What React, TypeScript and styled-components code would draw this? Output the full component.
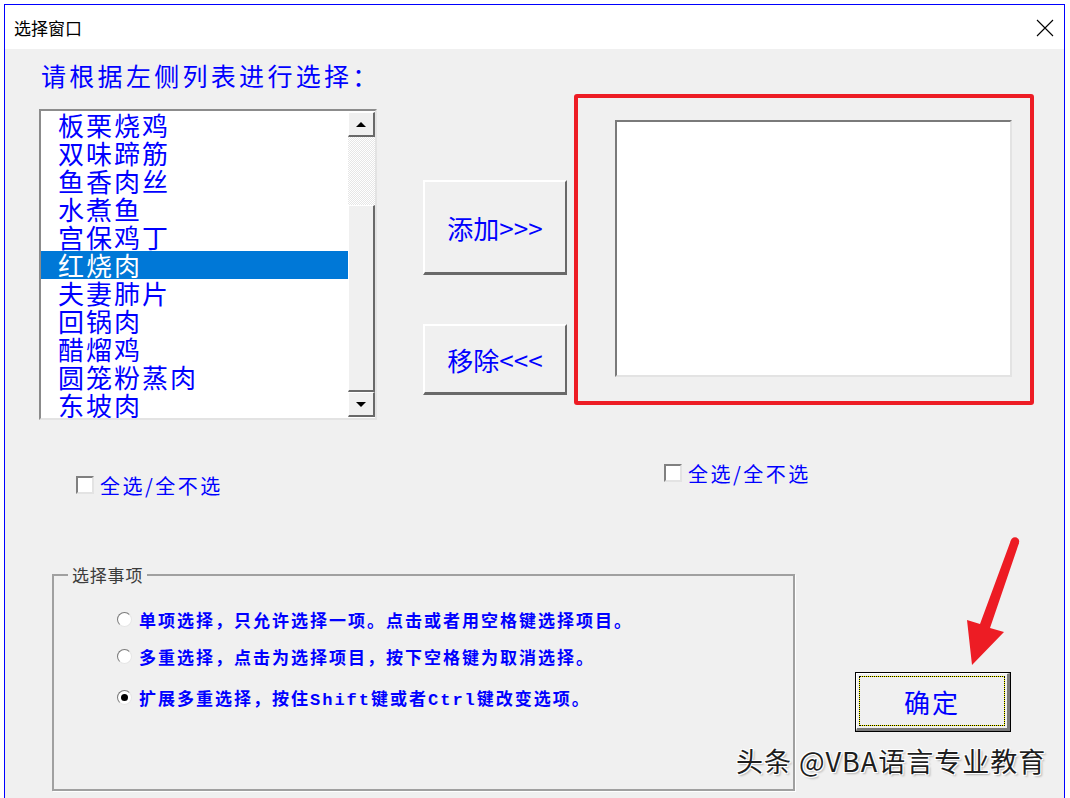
import styled, { createGlobalStyle } from 'styled-components';

const GlobalStyle = createGlobalStyle`
  html, body {
    margin: 0;
    padding: 0;
    background: #ffffff;
  }
  body {
    font-family: "Noto Sans CJK SC", sans-serif;
  }
  * {
    box-sizing: border-box;
  }
`;

const CJK = `"Noto Sans CJK SC", sans-serif`;

const Page = styled.div`
  position: relative;
  width: 1070px;
  height: 798px;
  overflow: hidden;
`;

const Window = styled.div`
  margin: 4px 0 0 4px;
  width: 1061px;
  height: 840px;
  border: 1px solid #0000ff;
  border-bottom: none;
  display: flex;
  flex-direction: column;
`;

const TitleBar = styled.div`
  height: 44px;
  background: #ffffff;
  display: flex;
  align-items: center;
  justify-content: space-between;
  padding: 0 10px 0 9px;
`;

const Title = styled.span`
  font-family: ${CJK};
  font-size: 17px;
  color: #000000;
`;

const CloseIcon = styled.svg`
  width: 18px;
  height: 18px;
  margin-top: 2px;
`;

const Body = styled.div`
  flex: 1;
  background: #f0f0f0;
`;

const Heading = styled.div`
  margin: 8px 0 0 36px;
  font-family: ${CJK};
  font-size: 25px;
  line-height: 36px;
  letter-spacing: 3.3px;
  color: #0000ff;
`;

const TopRow = styled.div`
  display: flex;
  align-items: flex-start;
  margin-top: 1px;
  padding-left: 34px;
`;

const ListBox = styled.div`
  margin-top: 15px;
  width: 338px;
  height: 311px;
  border-style: solid;
  border-width: 2px;
  border-color: #8c8c8c #e3e3e3 #e3e3e3 #8c8c8c;
  background: #ffffff;
  display: flex;
  overflow: hidden;
`;

const Items = styled.div`
  flex: 1;
  display: flex;
  flex-direction: column;
  overflow: hidden;
`;

const Item = styled.div<{ $selected?: boolean }>`
  flex: none;
  height: 28px;
  line-height: 28px;
  padding-left: 17px;
  font-family: ${CJK};
  font-size: 26px;
  letter-spacing: 2px;
  white-space: nowrap;
  color: ${({ $selected }) => ($selected ? '#ffffff' : '#0000ff')};
  background: ${({ $selected }) => ($selected ? '#0078d7' : 'transparent')};
`;

const ScrollBar = styled.div`
  width: 27px;
  display: flex;
  flex-direction: column;
  padding-top: 1px;
`;

const ScrollButton = styled.div`
  height: 25px;
  background: #f0f0f0;
  border-style: solid;
  border-width: 1px 2px 2px 1px;
  border-color: #ffffff #696969 #696969 #ffffff;
  display: flex;
  align-items: center;
  justify-content: center;
`;

const Triangle = styled.div<{ $down?: boolean }>`
  width: 0;
  height: 0;
  border-left: 5px solid transparent;
  border-right: 5px solid transparent;
  ${({ $down }) =>
    $down ? 'border-top: 5px solid #000000;' : 'border-bottom: 5px solid #000000;'}
`;

const Track = styled.div`
  height: 68px;
  background: repeating-conic-gradient(#ffffff 0 25%, #e6e6e6 0 50%) 0 0 / 2px 2px;
`;

const Thumb = styled.div`
  height: 187px;
  background: #f0f0f0;
  border-style: solid;
  border-width: 1px 2px 2px 1px;
  border-color: #ffffff #696969 #696969 #ffffff;
`;

const ButtonColumn = styled.div`
  margin: 86px 0 0 46px;
  display: flex;
  flex-direction: column;
  gap: 49px;
`;

const ActionButton = styled.div<{ $height: number }>`
  width: 144px;
  height: ${({ $height }) => $height}px;
  background: #f0f0f0;
  border-style: solid;
  border-width: 2px 2px 3px 2px;
  border-color: #ffffff #696969 #696969 #ffffff;
  display: flex;
  align-items: center;
  justify-content: center;
  font-family: ${CJK};
  font-size: 26px;
  color: #0000ff;
`;

const RedBox = styled.div`
  margin-left: 7px;
  width: 460px;
  height: 311px;
  border: 4px solid #ed1c24;
  border-radius: 3px;
  padding: 22px 0 0 37px;
`;

const TargetList = styled.div`
  width: 397px;
  height: 257px;
  background: #ffffff;
  border-style: solid;
  border-width: 2px;
  border-color: #7a7a7a #e3e3e3 #e3e3e3 #7a7a7a;
`;

const CheckRow = styled.div`
  display: grid;
  grid-template-columns: 588px auto;
  align-items: start;
  margin-top: 40px;
  padding-left: 71px;
`;

const CheckItem = styled.label<{ $offset: number }>`
  margin-top: ${({ $offset }) => $offset}px;
  height: 26px;
  display: flex;
  align-items: center;
  gap: 6px;
  font-family: ${CJK};
  font-size: 20px;
  letter-spacing: 2.5px;
  color: #0000ff;
`;

const CheckBox = styled.span`
  width: 18px;
  height: 18px;
  background: #ffffff;
  border-style: solid;
  border-width: 2px;
  border-color: #808080 #e3e3e3 #e3e3e3 #808080;
`;

const BottomRow = styled.div`
  display: flex;
  align-items: flex-start;
  margin-top: 67px;
  padding-left: 47px;
`;

const Frame = styled.fieldset`
  margin: 0;
  padding: 0;
  width: 743px;
  height: 226px;
  border: 2px solid #a0a0a0;
  box-shadow: 1px 1px 0 #ffffff;
`;

const FrameTitle = styled.legend`
  margin-left: 14px;
  padding: 0 4px;
  font-family: ${CJK};
  font-size: 17px;
  line-height: 20px;
  letter-spacing: 0.8px;
  color: #3c3c3c;
`;

const RadioList = styled.div`
  padding: 22px 0 0 63px;
  display: flex;
  flex-direction: column;
  gap: 13px;
`;

const RadioRow = styled.div<{ $shift?: number }>`
  margin-top: ${({ $shift }) => $shift ?? 0}px;
  height: 24px;
  display: flex;
  align-items: center;
  gap: 7px;
  font-family: "Liberation Mono", "Noto Sans CJK SC", monospace;
  font-size: 17px;
  font-weight: bold;
  letter-spacing: 2px;
  white-space: nowrap;
  color: #0000ff;
`;

const Radio = styled.span<{ $checked?: boolean }>`
  width: 15px;
  height: 15px;
  border-radius: 50%;
  background: #ffffff;
  border: 1px solid;
  border-color: #7a7a7a #e6e6e6 #e6e6e6 #7a7a7a;
  display: flex;
  align-items: center;
  justify-content: center;
  &::after {
    content: '';
    width: 7px;
    height: 7px;
    border-radius: 50%;
    background: ${({ $checked }) => ($checked ? '#000000' : 'transparent')};
  }
`;

const OkButton = styled.div`
  margin: 107px 0 0 60px;
  width: 156px;
  height: 60px;
  border: 1px solid #000000;
  background: #f0f0f0;
  display: flex;
`;

const OkInner = styled.div`
  flex: 1;
  border-style: solid;
  border-width: 1px 3px 3px 1px;
  border-color: #ffffff #7a7a7a #7a7a7a #ffffff;
  padding: 2px;
  display: flex;
`;

const FocusRect = styled.div`
  flex: 1;
  border: 1px solid #ffff00;
  outline: 1px dotted #000000;
  outline-offset: -1px;
  display: flex;
  align-items: center;
  justify-content: center;
  font-family: ${CJK};
  font-size: 26px;
  letter-spacing: 2px;
  color: #0000ff;
`;

const Arrow = styled.svg`
  position: absolute;
  left: 960px;
  top: 535px;
  width: 65px;
  height: 135px;
`;

const Watermark = styled.div`
  position: absolute;
  left: 736px;
  top: 743px;
  font-family: ${CJK};
  font-size: 27px;
  line-height: 36px;
  letter-spacing: 1px;
  color: #1e1e1e;
  white-space: nowrap;
  text-shadow: 1px 1px 0 #ffffff, -1px -1px 0 #ffffff, 1px -1px 0 #ffffff, -1px 1px 0 #ffffff,
    2px 2px 2px rgba(0, 0, 0, 0.25);
`;

const dishes = [
  '板栗烧鸡',
  '双味蹄筋',
  '鱼香肉丝',
  '水煮鱼',
  '宫保鸡丁',
  '红烧肉',
  '夫妻肺片',
  '回锅肉',
  '醋熘鸡',
  '圆笼粉蒸肉',
  '东坡肉',
];

const modes = [
  { label: '单项选择，只允许选择一项。点击或者用空格键选择项目。', checked: false, shift: 0 },
  { label: '多重选择，点击为选择项目，按下空格键为取消选择。', checked: false, shift: 0 },
  { label: '扩展多重选择，按住Shift键或者Ctrl键改变选项。', checked: true, shift: 4 },
];

export default function App() {
  return (
    <Page>
      <GlobalStyle />
      <Window>
        <TitleBar>
          <Title>选择窗口</Title>
          <CloseIcon viewBox="0 0 18 18">
            <path d="M1 1 L17 17 M17 1 L1 17" stroke="#000" strokeWidth="1.1" fill="none" />
          </CloseIcon>
        </TitleBar>
        <Body>
          <Heading>请根据左侧列表进行选择：</Heading>
          <TopRow>
            <ListBox>
              <Items>
                {dishes.map((dish, i) => (
                  <Item key={dish} $selected={i === 5}>
                    {dish}
                  </Item>
                ))}
              </Items>
              <ScrollBar>
                <ScrollButton>
                  <Triangle />
                </ScrollButton>
                <Track />
                <Thumb />
                <ScrollButton>
                  <Triangle $down />
                </ScrollButton>
              </ScrollBar>
            </ListBox>
            <ButtonColumn>
              <ActionButton $height={95}>添加&gt;&gt;&gt;</ActionButton>
              <ActionButton $height={71}>移除&lt;&lt;&lt;</ActionButton>
            </ButtonColumn>
            <RedBox>
              <TargetList />
            </RedBox>
          </TopRow>
          <CheckRow>
            <CheckItem $offset={12}>
              <CheckBox />
              全选/全不选
            </CheckItem>
            <CheckItem $offset={0}>
              <CheckBox />
              全选/全不选
            </CheckItem>
          </CheckRow>
          <BottomRow>
            <Frame>
              <FrameTitle>选择事项</FrameTitle>
              <RadioList>
                {modes.map((m) => (
                  <RadioRow key={m.label} $shift={m.shift}>
                    <Radio $checked={m.checked} />
                    {m.label}
                  </RadioRow>
                ))}
              </RadioList>
            </Frame>
            <OkButton>
              <OkInner>
                <FocusRect>确定</FocusRect>
              </OkInner>
            </OkButton>
          </BottomRow>
        </Body>
      </Window>
      <Arrow viewBox="0 0 65 135">
        <polygon points="51,5 59,8 30,93 44,97 12,130 7,85 20,89" fill="#ed1c24" />
        <circle cx="55" cy="6.5" r="4.2" fill="#ed1c24" />
      </Arrow>
      <Watermark>头条 @VBA语言专业教育</Watermark>
    </Page>
  );
}
